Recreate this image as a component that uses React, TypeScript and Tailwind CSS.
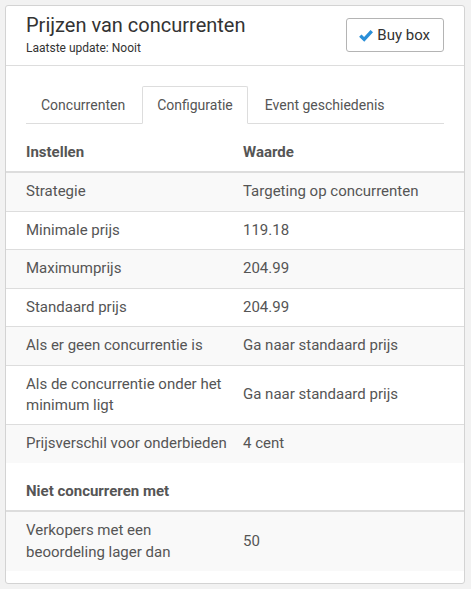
import React from 'react';

type Row = { label: string; value: string };

const CONFIG_ROWS: Row[] = [
  { label: 'Strategie', value: 'Targeting op concurrenten' },
  { label: 'Minimale prijs', value: '119.18' },
  { label: 'Maximumprijs', value: '204.99' },
  { label: 'Standaard prijs', value: '204.99' },
  { label: 'Als er geen concurrentie is', value: 'Ga naar standaard prijs' },
  { label: 'Als de concurrentie onder het minimum ligt', value: 'Ga naar standaard prijs' },
  { label: 'Prijsverschil voor onderbieden', value: '4 cent' },
];

const EXCLUDE_ROWS: Row[] = [
  { label: 'Verkopers met een beoordeling lager dan', value: '50' },
];

const TABS = ['Concurrenten', 'Configuratie', 'Event geschiedenis'];

function CheckIcon() {
  return (
    <svg width="14" height="13" viewBox="0 0 14 13" aria-hidden="true">
      <path d="M1.3 6.6 L5.2 10.4 L12.8 2.1" fill="none" stroke="#2a8fd8" strokeWidth="3.4" strokeLinejoin="miter" />
    </svg>
  );
}

function SettingsTable({ heading, headingValue, rows }: { heading: string; headingValue?: string; rows: Row[] }) {
  return (
    <div className="mt-[10px] text-[15px] leading-[1.4286] text-[#555]">
      <div className="grid grid-cols-[229px_1fr] border-b-2 border-[#dddddd] font-bold">
        <div className="py-2 pl-5 pr-1">{heading}</div>
        <div className="px-2 py-2">{headingValue}</div>
      </div>
      {rows.map((row, index) => (
        <div
          key={row.label}
          className={`grid grid-cols-[229px_1fr] items-center ${index > 0 ? 'border-t border-[#dddddd]' : ''} ${index % 2 === 0 ? 'bg-[#f9f9f9]' : 'bg-white'}`}
        >
          <div className="py-2 pl-5 pr-1">{row.label}</div>
          <div className="px-2 py-2">{row.value}</div>
        </div>
      ))}
    </div>
  );
}

export default function App() {
  return (
    <div className="min-h-[589px] bg-[#f2f2f2] pt-[5px] pl-[5px]" style={{ fontFamily: 'Roboto, "Noto Sans", sans-serif' }}>
      <section className="w-[460px] overflow-hidden rounded-[3px] border border-[#d3d3d3] bg-white pb-[12px]">
        <header className="flex items-center justify-between border-b border-[#dddddd] px-5 pt-[7px] pb-[8px]">
          <div>
            <h1 className="text-[20px] leading-[24px] text-[#333]">Prijzen van concurrenten</h1>
            <p className="mt-[3px] text-[12px] leading-[17px] text-[#333]">Laatste update: Nooit</p>
          </div>
          <button
            type="button"
            className="inline-flex h-[34px] items-center gap-[4px] rounded-[3px] border border-[#b4b4b4] bg-white pl-[12px] pr-[13px] text-[15px] text-[#333]"
          >
            <CheckIcon />
            Buy box
          </button>
        </header>

        <div className="px-5 pt-5">
          <ul className="flex border-b border-[#dddddd] text-[14px] leading-[22px] text-[#555]">
            {TABS.map((tab) => {
              const active = tab === 'Configuratie';
              return (
                <li
                  key={tab}
                  className={`-mb-px mr-[2px] rounded-t-[2px] border px-[14px] py-[7px] ${active ? 'border-[#dddddd] border-b-white bg-white' : 'border-transparent'}`}
                >
                  {tab}
                </li>
              );
            })}
          </ul>
        </div>

        <SettingsTable heading="Instellen" headingValue="Waarde" rows={CONFIG_ROWS} />
        <SettingsTable heading="Niet concurreren met" rows={EXCLUDE_ROWS} />
      </section>
    </div>
  );
}
